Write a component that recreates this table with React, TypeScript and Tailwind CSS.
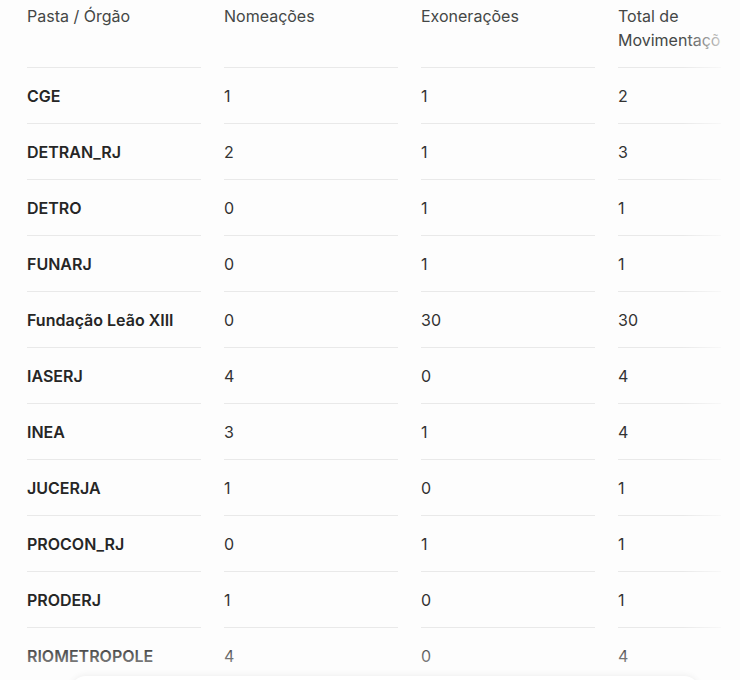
import React from "react";

const rows: [string, string, string, string][] = [
  ["CGE", "1", "1", "2"],
  ["DETRAN_RJ", "2", "1", "3"],
  ["DETRO", "0", "1", "1"],
  ["FUNARJ", "0", "1", "1"],
  ["Fundação Leão XIII", "0", "30", "30"],
  ["IASERJ", "4", "0", "4"],
  ["INEA", "3", "1", "4"],
  ["JUCERJA", "1", "0", "1"],
  ["PROCON_RJ", "0", "1", "1"],
  ["PRODERJ", "1", "0", "1"],
  ["RIOMETROPOLE", "4", "0", "4"],
];

export default function App() {
  return (
    <div
      className="relative h-[680px] w-[740px] overflow-hidden bg-[#fdfdfd] text-[16px]"
      style={{ fontFamily: "Inter, 'Noto Sans', sans-serif" }}
    >
      <div className="w-[721px] overflow-hidden pl-[27px]">
        <div className="flex gap-[23px] text-[#444746]">
          <div className="w-[174px] shrink-0 border-b border-[#e9e9e9] pt-[4px] pb-[15px] leading-[24px]">
            Pasta / Órgão
          </div>
          <div className="w-[174px] shrink-0 border-b border-[#e9e9e9] pt-[4px] pb-[15px] leading-[24px]">
            Nomeações
          </div>
          <div className="w-[174px] shrink-0 border-b border-[#e9e9e9] pt-[4px] pb-[15px] leading-[24px]">
            Exonerações
          </div>
          <div className="w-[174px] shrink-0 border-b border-[#e9e9e9] pt-[4px] pb-[15px] leading-[24px] whitespace-nowrap">
            Total de
            <br />
            Movimentações
          </div>
        </div>
        {rows.map((r) => (
          <div key={r[0]} className="flex gap-[23px]">
            <div className="flex h-[56px] w-[174px] shrink-0 items-center border-b border-[#e9e9e9] font-semibold text-[#262626] whitespace-nowrap">
              {r[0]}
            </div>
            {r.slice(1).map((v, i) => (
              <div
                key={i}
                className="flex h-[56px] w-[174px] shrink-0 items-center border-b border-[#e9e9e9] text-[#333333]"
              >
                {v}
              </div>
            ))}
          </div>
        ))}
      </div>
      <div className="pointer-events-none absolute top-0 left-[682px] h-full w-[40px] bg-gradient-to-r from-[#fdfdfd00] to-[#fdfdfdc0]" />
      <div className="pointer-events-none absolute bottom-0 left-0 h-[40px] w-full bg-gradient-to-b from-[#fdfdfd00] to-[#fdfdfdb0]" />
      <div className="absolute top-[676px] left-[70px] h-[20px] w-[630px] rounded-t-[16px] bg-white shadow-[0_-1px_6px_rgba(0,0,0,0.06)]" />
    </div>
  );
}
